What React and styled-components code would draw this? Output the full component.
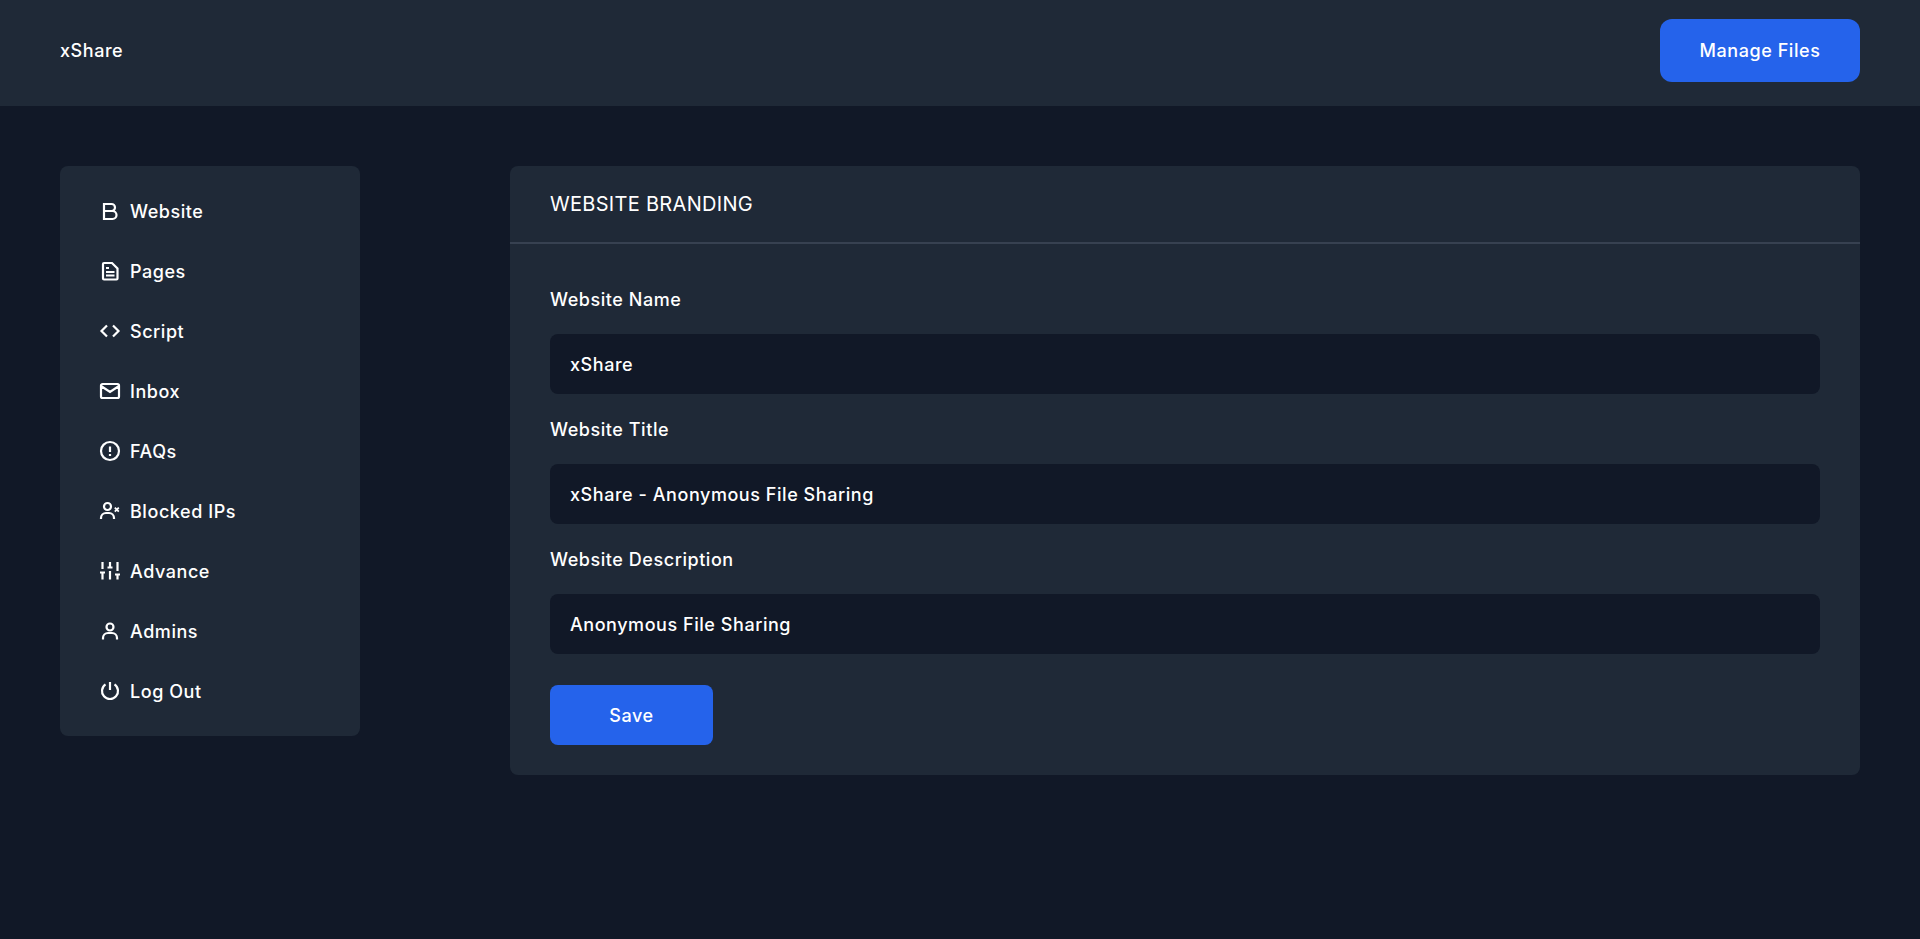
import React from 'react';
import styled, { createGlobalStyle } from 'styled-components';

const GlobalStyle = createGlobalStyle`
  * { box-sizing: border-box; }
  html, body { margin: 0; background: #111827; }
  body {
    color: #fff;
    font-family: "Inter", "Noto Sans", sans-serif;
    font-size: 18px;
    font-weight: 450;
    letter-spacing: 0.55px;
    min-height: 939px;
  }
`;

const TopBar = styled.header`
  height: 106px;
  padding: 0 60px 5px;
  background: #1f2937;
  display: flex;
  align-items: center;
  justify-content: space-between;
`;

const Brand = styled.div`
  line-height: 27px;
`;

const Button = styled.button`
  height: ${props => props.$height}px;
  width: ${props => props.$width}px;
  border: 0;
  border-radius: ${props => props.$radius}px;
  background: #2563eb;
  color: #fff;
  font: inherit;
  letter-spacing: inherit;
`;

const Layout = styled.main`
  padding: 60px 60px 0;
  display: flex;
  align-items: flex-start;
  gap: 150px;
`;

const Sidebar = styled.nav`
  width: 300px;
  flex: none;
  padding: 15px 38px;
  background: #1f2937;
  border-radius: 8px;
  display: flex;
  flex-direction: column;
`;

const NavItem = styled.a`
  height: 60px;
  display: flex;
  align-items: center;
  gap: 8px;
  color: #fff;
`;

const NavIcon = styled.svg.attrs({
  viewBox: '0 0 24 24',
  fill: 'none',
  stroke: 'currentColor',
  strokeWidth: 2.2,
})`
  width: 24px;
  height: 24px;
  flex: none;
`;

const Card = styled.section`
  flex: 1;
  background: #1f2937;
  border-radius: 8px;
`;

const CardHeader = styled.h2`
  margin: 0;
  height: 78px;
  padding: 0 40px;
  display: flex;
  align-items: center;
  border-bottom: 2px solid #374151;
  font-size: 20px;
  font-weight: 400;
  letter-spacing: 0.3px;
`;

const CardBody = styled.form`
  padding: 41px 40px 30px;
`;

const Field = styled.label`
  display: block;
  margin-bottom: 21px;
`;

const FieldLabel = styled.span`
  display: block;
  line-height: 27px;
  padding-top: 1px;
  margin-bottom: 21px;
`;

const Input = styled.input`
  display: block;
  width: 100%;
  height: 60px;
  padding: 0 20px;
  border: 0;
  border-radius: 8px;
  outline: 0;
  background: #111827;
  color: #fff;
  font: inherit;
  letter-spacing: inherit;
`;

const Actions = styled.div`
  padding-top: 10px;
`;

const links = [
  ['Website', <path key="b" d="M6 12V5h7.500a3.500 3.500 0 0 1 0 7H6v8h8.500a4 4 0 0 0 0-8h-1" />],
  ['Pages', <path key="f" d="M6 4h8l5.500 5.500V19.500a1 1 0 0 1-1 1H6a1 1 0 0 1-1-1V5a1 1 0 0 1 1-1zM8 9h3M8 13h8.500M8 16.500h8.500" />],
  ['Script', <path key="c" d="M9 6.500 3.500 12 9 17.500M15 6.500l5.500 5.500-5.500 5.500" />],
  ['Inbox', <path key="m" d="M4.500 5h15A1.500 1.500 0 0 1 21 6.500v11a1.500 1.500 0 0 1-1.500 1.500h-15A1.500 1.500 0 0 1 3 17.500v-11A1.500 1.500 0 0 1 4.500 5zM3 7l9 6 9-6" />],
  ['FAQs', <path key="q" d="M12 3a9 9 0 1 0 0 18 9 9 0 0 0 0-18zM12 7.500v5.500M12 15v2" />],
  ['Blocked IPs', (
    <React.Fragment key="x">
      <path d="M9.500 4a3.500 3.500 0 1 0 0 7 3.500 3.500 0 0 0 0-7zM3 20v-1a5 5 0 0 1 5-5h3a5 5 0 0 1 5 5v1" />
      <path strokeWidth="1.800" d="M16.800 8.600l4 4M20.800 8.600l-4 4" />
    </React.Fragment>
  )],
  ['Advance', <path key="s" d="M4.500 20.500V14M4.500 10V3M12 20.500V12M12 8V3M19.500 20.500V16M19.500 12V3M2 13.500h5M9.500 8.500h5M17 15.500h5" />],
  ['Admins', <path key="u" d="M12 4.500a3.500 3.500 0 1 0 0 7 3.500 3.500 0 0 0 0-7zM5 20.500V19a5 5 0 0 1 5-5h4a5 5 0 0 1 5 5v1.500" />],
  ['Log Out', <path key="p" d="M12 3v8M7.500 5.400a8 8 0 1 0 9 0" />],
];

const fields = [
  ['Website Name', 'xShare'],
  ['Website Title', 'xShare - Anonymous File Sharing'],
  ['Website Description', 'Anonymous File Sharing'],
];

export default function App() {
  return (
    <>
      <GlobalStyle />
      <TopBar>
        <Brand>xShare</Brand>
        <Button type="button" $width={200} $height={63} $radius={12}>Manage Files</Button>
      </TopBar>
      <Layout>
        <Sidebar>
          {links.map(([label, glyph]) => (
            <NavItem key={label}>
              <NavIcon>{glyph}</NavIcon>
              {label}
            </NavItem>
          ))}
        </Sidebar>
        <Card>
          <CardHeader>WEBSITE BRANDING</CardHeader>
          <CardBody>
            {fields.map(([label, value]) => (
              <Field key={label}>
                <FieldLabel>{label}</FieldLabel>
                <Input defaultValue={value} />
              </Field>
            ))}
            <Actions>
              <Button type="button" $width={163} $height={60} $radius={8}>Save</Button>
            </Actions>
          </CardBody>
        </Card>
      </Layout>
    </>
  );
}
